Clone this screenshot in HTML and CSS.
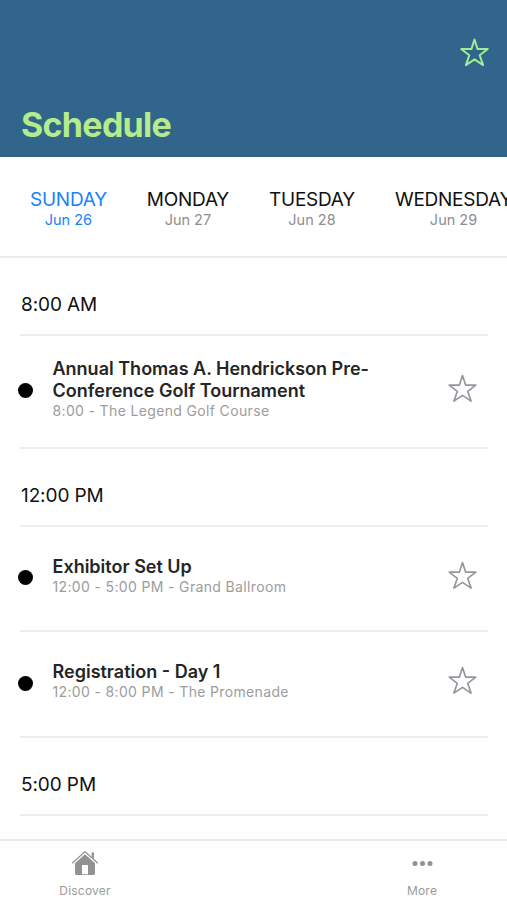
FILE: index.html
```
<!DOCTYPE html>
<html lang="en">

<head>
    <meta charset="UTF-8">
    <meta name="viewport" content="width=device-width, initial-scale=1.0">
    <title>Schedule</title>
    <link rel="stylesheet" href="styles.css">
</head>

<body>
    <svg class="sprite">
        <symbol id="star" viewBox="0 0 28 28">
            <path d="M14 1.5 L17 10.7 L26.8 10.7 L19 16.7 L22.3 26.2 L14 20.6 L5.7 26.2 L9 16.7 L1.2 10.7 L11 10.7 Z" />
        </symbol>
    </svg>

    <header class="header">
        <svg class="star"><use href="#star" /></svg>
        <h1>Schedule</h1>
    </header>

    <nav class="days">
        <div class="day active"><span class="name">SUNDAY</span><span class="date">Jun 26</span></div>
        <div class="day"><span class="name">MONDAY</span><span class="date">Jun 27</span></div>
        <div class="day"><span class="name">TUESDAY</span><span class="date">Jun 28</span></div>
        <div class="day"><span class="name">WEDNESDAY</span><span class="date">Jun 29</span></div>
    </nav>

    <main class="list">
        <h2 class="time">8:00 AM</h2>
        <div class="event tall">
            <span class="dot"></span>
            <div class="info">
                <div class="title">Annual Thomas A. Hendrickson Pre-<br>Conference Golf Tournament</div>
                <div class="detail">8:00 - The Legend Golf Course</div>
            </div>
            <svg class="star"><use href="#star" /></svg>
        </div>
        <h2 class="time">12:00 PM</h2>
        <div class="event">
            <span class="dot"></span>
            <div class="info">
                <div class="title">Exhibitor Set Up</div>
                <div class="detail">12:00 - 5:00 PM - Grand Ballroom</div>
            </div>
            <svg class="star"><use href="#star" /></svg>
        </div>
        <div class="event last">
            <span class="dot"></span>
            <div class="info">
                <div class="title">Registration - Day 1</div>
                <div class="detail">12:00 - 8:00 PM - The Promenade</div>
            </div>
            <svg class="star"><use href="#star" /></svg>
        </div>
        <h2 class="time">5:00 PM</h2>
    </main>

    <footer class="tabbar">
        <div class="tab">
            <svg class="icon" viewBox="0 0 28 28">
                <path class="roof" d="M1.2 14.2 L14 2.6 L26.8 14.2" />
                <path d="M20.6 3.5 H23 V10 L20.6 7.8 Z" />
                <path fill-rule="evenodd" d="M4 14.2 L14 5.2 L24 14.2 V24.5 Q24 26 22.5 26 H5.5 Q4 26 4 24.5 Z M11 16 V25.2 H17 V16 Z" />
            </svg>
            <span>Discover</span>
        </div>
        <div class="tab">
            <svg class="icon" viewBox="0 0 28 28">
                <circle cx="7" cy="14.5" r="2.5" />
                <circle cx="14.5" cy="14.5" r="2.5" />
                <circle cx="22" cy="14.5" r="2.5" />
            </svg>
            <span>More</span>
        </div>
    </footer>
</body>

</html>
```

FILE: styles.css
```
* {
    box-sizing: border-box;
}

body {
    margin: 0;
    height: 900px;
    display: flex;
    flex-direction: column;
    overflow: hidden;
    font-family: Inter, "Liberation Sans", sans-serif;
    background-color: white;
    color: #111;
}

.sprite {
    display: none;
}

.star {
    width: 29px;
    height: 29px;
    flex: none;
    fill: none;
    stroke: #92979d;
    stroke-width: 1.6;
    stroke-linejoin: round;
}

.header {
    height: 157px;
    flex: none;
    display: flex;
    flex-direction: column;
    padding: 38px 18px 0 21px;
    background-color: #32658b;
    color: #b5eb8b;
}

.header .star {
    align-self: flex-end;
    stroke: #a0ee91;
    stroke-width: 1.9;
}

h1 {
    margin: 38px 0 0;
    font-size: 34px;
    line-height: 40px;
    font-weight: 700;
    letter-spacing: -0.7px;
}

.days {
    height: 101px;
    flex: none;
    display: flex;
    gap: 40px;
    padding: 31px 0 0 30px;
    border-bottom: 2px solid #ebebeb;
}

.day {
    display: flex;
    flex-direction: column;
    align-items: center;
    flex: none;
}

.name {
    font-size: 19px;
    line-height: 23px;
    letter-spacing: -0.25px;
}

.date {
    font-size: 14.5px;
    line-height: 18px;
    color: #8e8e8e;
}

.active,
.active .date {
    color: #1a82fb;
}

.list {
    flex: 1;
    padding: 0 19px 0 20px;
}

.time {
    height: 78px;
    margin: 0;
    padding: 34px 0 0 1px;
    font-size: 19px;
    line-height: 25px;
    font-weight: 400;
    letter-spacing: -0.1px;
    border-bottom: 2px solid #ededed;
}

.event {
    height: 105px;
    display: flex;
    align-items: flex-start;
    padding: 29px 11px 0 0;
    border-bottom: 2px solid #ededed;
}

.event.tall {
    height: 113px;
    padding-top: 22px;
}

.event.last {
    height: 106px;
}

.dot {
    width: 15px;
    height: 15px;
    flex: none;
    margin: 14px 19.5px 0 -2px;
    border-radius: 50%;
    background-color: black;
}

.last .dot {
    margin-top: 15px;
}

.tall .dot {
    margin-top: 25px;
}

.info {
    flex: 1;
}

.title {
    font-size: 18px;
    line-height: 22px;
    font-weight: 600;
    color: #252525;
    white-space: nowrap;
}

.detail {
    font-size: 14px;
    line-height: 18px;
    letter-spacing: 0.35px;
    color: #9c9c9c;
}

.event .star {
    margin-top: 5px;
}

.event.tall .star {
    margin-top: 16px;
}

.tabbar {
    height: 61px;
    flex: none;
    display: flex;
    justify-content: space-between;
    border-top: 2px solid #ebebeb;
    background-color: white;
}

.tab {
    width: 170px;
    display: flex;
    flex-direction: column;
    align-items: center;
    padding-top: 8px;
    font-size: 12px;
    line-height: 16px;
    letter-spacing: 0.2px;
    color: #9a9a9a;
}

.icon {
    width: 28px;
    height: 28px;
    margin-bottom: 6px;
    fill: #929292;
}

.roof {
    fill: none;
    stroke: #929292;
    stroke-width: 1.4;
}
```
